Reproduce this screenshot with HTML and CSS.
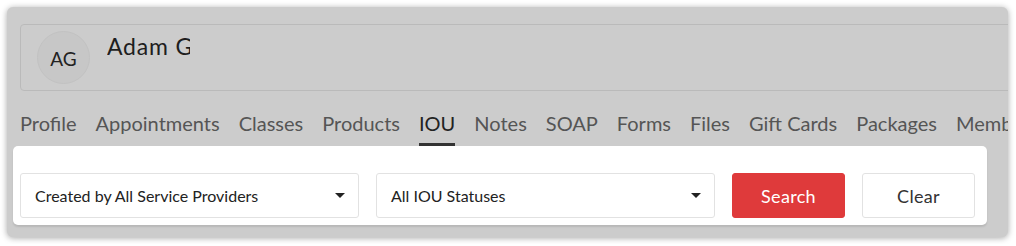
FILE: index.html
```html
<!DOCTYPE html>
<html>
<head>
<meta charset="utf-8">
<link rel="stylesheet" href="styles.css">
</head>
<body>
<div class="modal">
  <div class="client-card">
    <div class="avatar">AG</div>
    <div class="client-name">Adam Gardner</div>
  </div>
  <nav class="tabs">
    <span class="tab">Profile</span>
    <span class="tab">Appointments</span>
    <span class="tab">Classes</span>
    <span class="tab">Products</span>
    <span class="tab active">IOU</span>
    <span class="tab">Notes</span>
    <span class="tab">SOAP</span>
    <span class="tab">Forms</span>
    <span class="tab">Files</span>
    <span class="tab">Gift Cards</span>
    <span class="tab">Packages</span>
    <span class="tab">Memberships</span>
  </nav>
  <div class="filters">
    <div class="select">
      <span>Created by All Service Providers</span>
      <span class="caret"></span>
    </div>
    <div class="select">
      <span>All IOU Statuses</span>
      <span class="caret"></span>
    </div>
    <button class="btn btn-primary">Search</button>
    <button class="btn btn-default">Clear</button>
  </div>
</div>
</body>
</html>
```
FILE: styles.css
```css
* { box-sizing: border-box; }
body {
  margin: 0;
  background: #ffffff;
  font-family: Lato, "Liberation Sans", sans-serif;
}
.modal {
  margin: 7px;
  width: 1001px;
  height: 230px;
  background: #cccccc;
  border-radius: 6px;
  box-shadow: 0 1px 6px rgba(0, 0, 0, 0.35);
  overflow: hidden;
  padding: 17px 0 0 6px;
}
.client-card {
  margin-left: 7px;
  width: 1100px;
  height: 67px;
  border: 1px solid #bababa;
  border-radius: 4px;
  display: flex;
  align-items: flex-start;
  padding: 6px 16px;
  gap: 17px;
}
.avatar {
  width: 53px;
  height: 53px;
  border-radius: 50%;
  background: #c7c7c7;
  border: 1px solid #c2c2c2;
  display: flex;
  align-items: center;
  justify-content: center;
  font-size: 19px;
  color: #222;
  padding-top: 2px;
}
.client-name {
  width: 83px;
  overflow: hidden;
  white-space: nowrap;
  font-size: 23px;
  letter-spacing: 0.8px;
  color: #1e1e1e;
  margin-top: 1px;
}
.tabs {
  display: flex;
  gap: 19px;
  margin-left: 7px;
  height: 55px;
  align-items: flex-end;
  white-space: nowrap;
}
.tab {
  font-size: 20px;
  line-height: 24px;
  color: #555555;
  padding-bottom: 8px;
  border-bottom: 3px solid transparent;
}
.tab.active {
  color: #222222;
  border-bottom-color: #333333;
}
.filters {
  width: 974px;
  height: 79px;
  background: #ffffff;
  border-radius: 5px;
  display: flex;
  align-items: flex-end;
  gap: 17px;
  padding: 0 12px 7px 7px;
  box-shadow: 0 2px 2px rgba(0, 0, 0, 0.1);
}
.select {
  width: 339px;
  height: 45px;
  border: 1px solid #e2e2e2;
  border-radius: 3px;
  display: flex;
  align-items: center;
  justify-content: space-between;
  padding: 0 13px 0 14px;
  font-size: 16px;
  color: #222;
}
.caret {
  width: 0;
  height: 0;
  border-left: 5px solid transparent;
  border-right: 5px solid transparent;
  border-top: 5px solid #222;
}
.btn {
  width: 113px;
  height: 45px;
  border-radius: 3px;
  font-family: inherit;
  font-size: 18px;
  letter-spacing: 0.3px;
  cursor: pointer;
}
.btn-primary {
  background: #df3a3b;
  border: 1px solid #df3a3b;
  color: #ffffff;
}
.btn-default {
  background: #ffffff;
  border: 1px solid #e2e2e2;
  color: #333333;
}
```
